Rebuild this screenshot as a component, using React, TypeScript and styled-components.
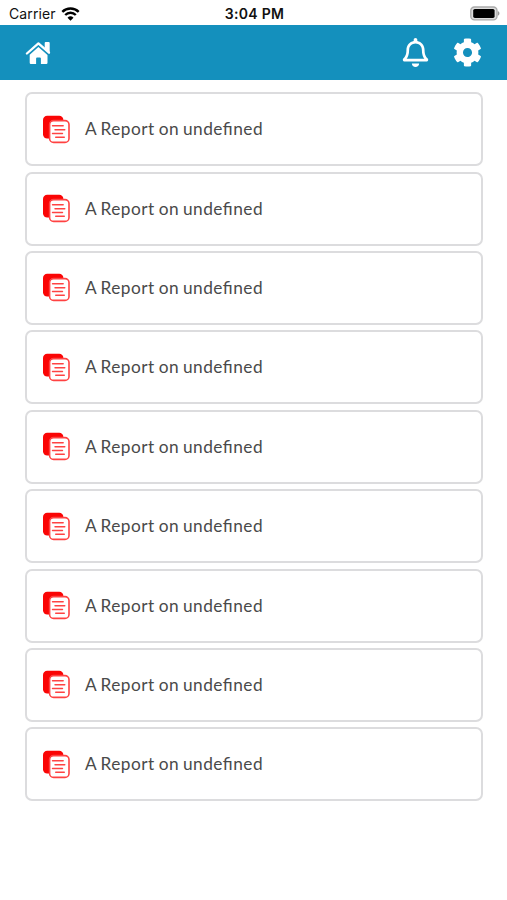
import React from "react";
import styled, { createGlobalStyle } from "styled-components";
import { FaRegBell, FaCog } from "react-icons/fa";

const GlobalStyle = createGlobalStyle`
  * { box-sizing: border-box; }
  body { margin: 0; background: #fff; font-family: Inter, sans-serif; }
`;

const Screen = styled.div`
  height: 900px;
  background: #fff;
  overflow: hidden;
`;

const StatusBar = styled.div`
  height: 25px;
  display: grid;
  grid-template-columns: 1fr auto 1fr;
  align-items: center;
  padding: 3px 7px 0 9px;
  color: #111;
`;

const Carrier = styled.div`
  display: flex;
  align-items: center;
  gap: 5px;
  font-size: 14px;
  line-height: 20px;
  letter-spacing: 0.12px;
`;

const Clock = styled.div`
  font-size: 14px;
  line-height: 20px;
  font-weight: 600;
  letter-spacing: 0.32px;
`;

const BatterySlot = styled.div`
  display: flex;
  justify-content: flex-end;
  margin-top: -2px;
`;

const Header = styled.header`
  height: 55px;
  background: #1490bd;
  color: #fff;
  display: flex;
  align-items: center;
  justify-content: space-between;
  padding: 0 25px;
`;

const Actions = styled.div`
  display: flex;
  align-items: center;
  gap: 23px;
`;

const List = styled.main`
  display: flex;
  flex-direction: column;
  gap: 5.4px;
  padding: 12.2px 24px 0 25px;
`;

const Card = styled.div`
  height: 74px;
  border: 2px solid #dcdcde;
  border-radius: 7px;
  background: #fff;
  display: flex;
  align-items: center;
  gap: 14px;
  padding-left: 15px;
`;

const Title = styled.span`
  font-family: Lato, sans-serif;
  font-size: 17.3px;
  line-height: 24px;
  letter-spacing: 0.48px;
  word-spacing: -1px;
  font-feature-settings: "liga" 1;
  color: #4a4a4a;
`;

const HomeIcon = () => (
  <svg width="26" height="24" viewBox="0 0 26 24" fill="#fff">
    <path
      d="M1.9 12.5 13.4 2.4 24 11.7"
      fill="none"
      stroke="#fff"
      strokeWidth="2.3"
      strokeLinecap="round"
      strokeLinejoin="round"
    />
    <path d="M19.7 2.1q0-1 1-1h3q1 0 1 1v9.6l-5-4.4z" />
    <path d="M13.4 5.9 22.5 13.9v7.8q0 1.2-1.2 1.2h-5.4v-5.4q0-1-1-1h-2.8q-1 0-1 1v5.4H5.9q-1.2 0-1.2-1.2v-8z" />
  </svg>
);

const WifiIcon = () => (
  <svg width="19" height="15" viewBox="0 0 19 15" fill="none" stroke="#000" strokeWidth="2.4">
    <path d="M1.3 4.9a11.7 11.7 0 0 1 16.4 0" />
    <path d="M4.2 8a7.5 7.5 0 0 1 10.6 0" />
    <path d="M9.5 13.8 6.5 10.7a4.3 4.3 0 0 1 6 0z" fill="#000" stroke="none" />
  </svg>
);

const BatteryIcon = () => (
  <svg width="31" height="15" viewBox="0 0 31 15">
    <rect x="1.8" y="1" width="26.2" height="12.8" rx="3.6" fill="#ddd" stroke="#aaa" strokeWidth="1.3" />
    <rect x="4.2" y="2.9" width="21.4" height="9" rx="1.6" fill="#000" />
    <path d="M28.8 5.1c2.2.9 2.2 3.9 0 4.8z" fill="#999" />
  </svg>
);

const ReportIcon = () => (
  <svg width="29" height="29" viewBox="0 0 29 29">
    <rect x="1" y="0.8" width="20.4" height="22.8" rx="4.2" fill="#fa0505" />
    <rect x="7.6" y="5.6" width="19.4" height="21.8" rx="4" fill="#fff" stroke="#ff4242" strokeWidth="1.6" />
    <path
      d="M10.5 10.8h10.7M13 14.7h9.8M10.5 18.5h10M13.7 22.3h8.6"
      stroke="#ff4242"
      strokeWidth="1.4"
      strokeLinecap="round"
    />
  </svg>
);

const reports = Array.from({ length: 9 }, () => "A Report on undefined");

export default function App() {
  return (
    <>
      <GlobalStyle />
      <Screen>
        <StatusBar>
          <Carrier>
            Carrier
            <WifiIcon />
          </Carrier>
          <Clock>3:04 PM</Clock>
          <BatterySlot>
            <BatteryIcon />
          </BatterySlot>
        </StatusBar>
        <Header>
          <HomeIcon />
          <Actions>
            <FaRegBell size={29} />
            <FaCog size={29} />
          </Actions>
        </Header>
        <List>
          {reports.map((title, i) => (
            <Card key={i}>
              <ReportIcon />
              <Title>{title}</Title>
            </Card>
          ))}
        </List>
      </Screen>
    </>
  );
}
